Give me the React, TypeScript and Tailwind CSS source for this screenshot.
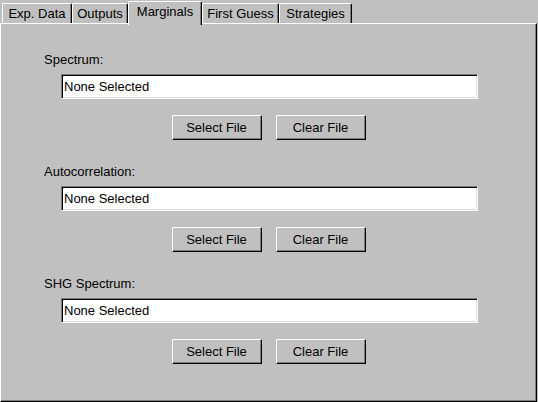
import React from "react";

const font = { fontFamily: '"Liberation Sans", Arial, sans-serif' };

function Tab({ label, w, active }: { label: string; w: string; active?: boolean }) {
  if (active) {
    return (
      <div
        className={`relative z-10 mt-[1px] h-[24px] ${w} bg-[#c0c0c0] border-l border-t border-r border-l-white border-t-white border-r-black rounded-t-[2px] shadow-[inset_-1px_0_#808080] flex items-start justify-center pt-[2px] text-[13px] leading-[16px] text-black`}
      >
        {label}
      </div>
    );
  }
  return (
    <div
      className={`mt-[3px] h-[20px] ${w} bg-[#c0c0c0] border-l border-t border-r border-l-white border-t-white border-r-black rounded-t-[2px] shadow-[inset_-1px_0_#808080] flex items-start justify-center pt-[2px] text-[13px] leading-[16px] text-black`}
    >
      {label}
    </div>
  );
}

function Button({ label }: { label: string }) {
  return (
    <div className="w-[90px] h-[25px] bg-[#c0c0c0] border border-t-white border-l-white border-r-black border-b-black shadow-[inset_-1px_-1px_#808080] flex items-center justify-center text-[13px] text-black">
      {label}
    </div>
  );
}

function Section({ label }: { label: string }) {
  return (
    <div className="flex flex-col">
      <div className="ml-[43px] h-[15px] text-[13px] leading-[15px] text-black">{label}</div>
      <div className="ml-[60px] mt-[7px] w-[417px] h-[25px] bg-white border border-t-[#808080] border-l-[#808080] border-r-white border-b-white shadow-[inset_1px_1px_#000,inset_-1px_-1px_#dfdfdf] flex items-center pl-[2px] text-[13px] text-black">
        None Selected
      </div>
      <div className="mt-[16px] flex justify-center gap-[14px]">
        <Button label="Select File" />
        <Button label="Clear File" />
      </div>
    </div>
  );
}

export default function App() {
  return (
    <div className="w-[538px] h-[402px] bg-[#c0c0c0] overflow-hidden" style={font}>
      <div className="flex h-[23px] pl-[2px]">
        <Tab label="Exp. Data" w="w-[70px]" />
        <Tab label="Outputs" w="w-[56px]" />
        <Tab label="Marginals" w="w-[74px]" active />
        <Tab label="First Guess" w="w-[77px]" />
        <Tab label="Strategies" w="w-[73px]" />
      </div>
      <div className="w-[537px] h-[379px] border border-t-white border-l-white border-r-black border-b-black shadow-[inset_-1px_-1px_#808080] pt-[28px] flex flex-col gap-[24px]">
        <Section label="Spectrum:" />
        <Section label="Autocorrelation:" />
        <Section label="SHG Spectrum:" />
      </div>
    </div>
  );
}
